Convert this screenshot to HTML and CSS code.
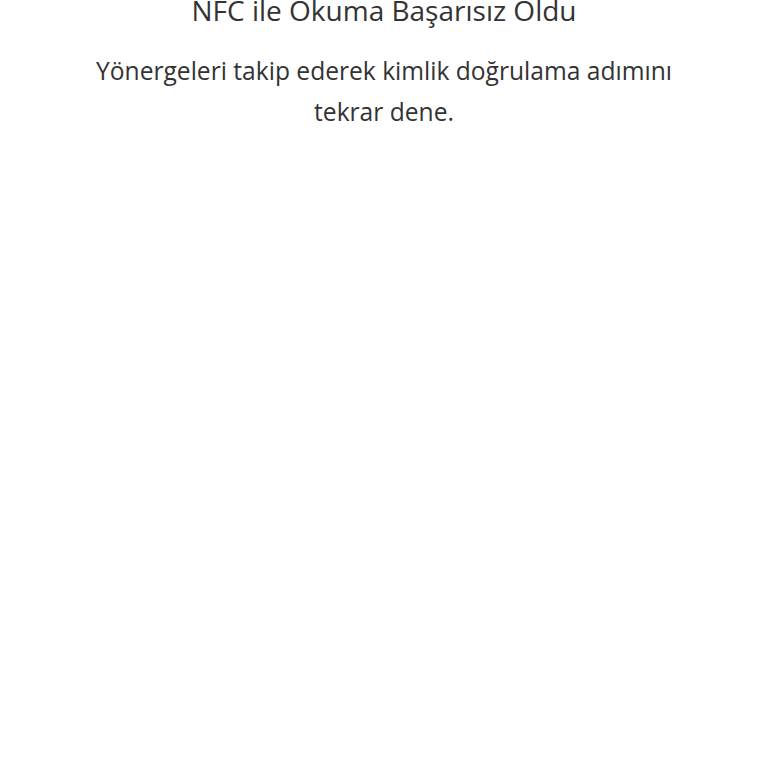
FILE: index.html
```html
<!DOCTYPE html>
<html lang="tr">
<head>
  <meta charset="UTF-8" />
  <title>NFC Hata</title>
  <link rel="stylesheet" href="styles.css">
</head>
<body>
  <div class="result">
    <h2 class="result-title">NFC ile Okuma Başarısız Oldu</h2>
    <p class="result-text">Yönergeleri takip ederek kimlik doğrulama adımını tekrar dene.</p>
  </div>
</body>
</html>
```

FILE: styles.css
```css
body { margin: 0; font-family: "Open Sans", sans-serif; background-color: #fff; color: #333; }

.result {
  margin-top: -8px;
  padding: 0 80px;
  text-align: center;
}

.result-title {
  margin: 0;
  font-size: 28px;
  font-weight: normal;
  line-height: 36px;
}

.result-text {
  margin: 22px 0 0;
  font-size: 24.6px;
  line-height: 41px;
}
```
